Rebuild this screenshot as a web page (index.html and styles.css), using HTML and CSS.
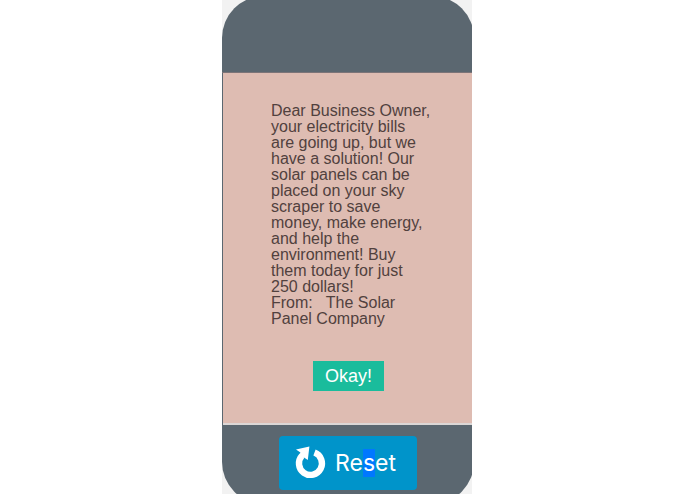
FILE: index.html
```
<!DOCTYPE html>
<html lang="en">
<head>
  <meta charset="UTF-8">
  <meta name="viewport" content="width=device-width,initial-scale=1.0">
  <title>Solar Panels</title>
  <link rel="stylesheet" href="styles.css">
</head>
<body>

  <main class="stage">
    <div class="phone">
      <div class="phone-top"></div>

      <div class="screen">
        <p class="message">Dear Business Owner,<br>
your electricity bills<br>
are going up, but we<br>
have a solution! Our<br>
solar panels can be<br>
placed on your sky<br>
scraper to save<br>
money, make energy,<br>
and help the<br>
environment! Buy<br>
them today for just<br>
250 dollars!<br>
From: &nbsp; The Solar<br>
Panel Company</p>
        <button class="okay-btn" type="button">Okay!</button>
      </div>

      <div class="phone-bottom">
        <button class="reset-btn" type="button">
          <svg class="reset-icon" viewBox="0 0 32 34" aria-hidden="true">
            <path d="M19.5 6.6 A11.5 11.5 0 1 1 7 9.6" fill="none" stroke="#fff" stroke-width="6.4"/>
            <path d="M1 3.4 L14.4 0.6 L12.8 14 L9 11.4 L4 10 L5.4 6.4 Z" fill="#fff"/>
          </svg>
          <span>Re<span class="selected">s</span>et</span>
        </button>
      </div>
    </div>
  </main>

</body>
</html>
```

FILE: styles.css
```
body {
  margin: 0;
  padding-right: 1px;
  background: #ffffff;
  font-family: "Liberation Sans", Arial, sans-serif;
}

/* the preview crops the top and bottom of the phone */
.stage {
  width: 250px;
  height: 100vh;
  margin: 0 auto;
  background: #f2f2f2;
  overflow: hidden;
}

.phone {
  width: 252px;
  margin-top: -4px;
  background: #5b6770;
  border-radius: 42px;
}

.phone-top {
  height: 76px;
  border-bottom: 1px solid #7c7478;
}

.screen {
  display: flex;
  flex-direction: column;
  align-items: center;
  margin-left: 1px;
  padding: 30px 0 32px;
  background: #debcb2;
  border-bottom: 2px solid #dcd7d6;
}

.message {
  align-self: stretch;
  margin: 0 0 34px;
  padding-left: 48px;
  color: #51413e;
  font-size: 16px;
  line-height: 16px;
  white-space: nowrap;
}

.okay-btn {
  width: 71px;
  height: 30px;
  padding: 0;
  border: 0;
  background: #1abc9c;
  color: #ffffff;
  font-family: inherit;
  font-size: 18px;
}

.phone-bottom {
  display: flex;
  justify-content: center;
  padding: 11px 0 14px;
}

.reset-btn {
  display: flex;
  align-items: center;
  gap: 8px;
  width: 138px;
  height: 54px;
  padding: 0 0 0 16px;
  border: 0;
  border-radius: 4px;
  background: #0094ca;
  color: #ffffff;
  font-family: Inter, sans-serif;
  font-size: 23px;
  font-weight: 400;
}

.reset-icon {
  width: 32px;
  height: 34px;
}

.selected {
  background: #0078ff;
}
```
